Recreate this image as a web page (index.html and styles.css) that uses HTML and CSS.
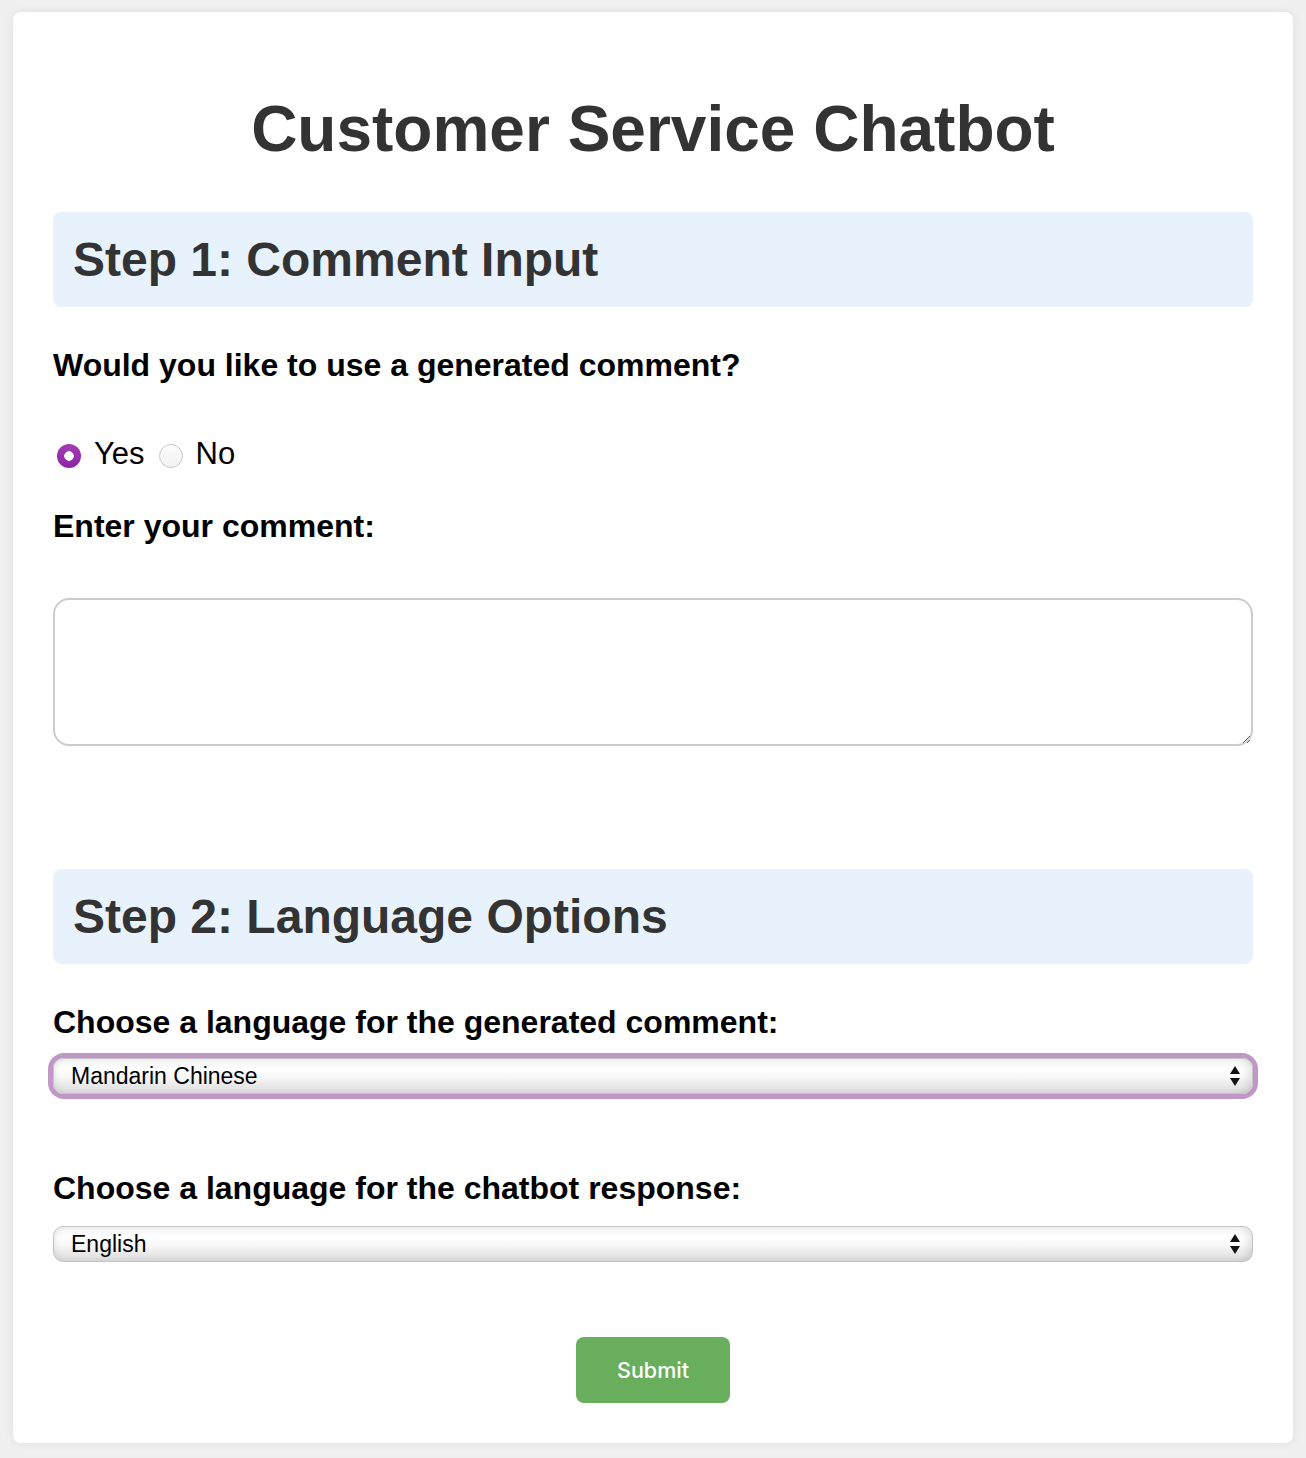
FILE: index.html
```html
<!DOCTYPE html>
<html lang="en">
<head>
<meta charset="utf-8">
<title>Customer Service Chatbot</title>
<link rel="stylesheet" href="styles.css">
</head>
<body>
<div class="container">
  <h1 class="title">Customer Service Chatbot</h1>

  <section class="step">
    <h2 class="step-title">Step 1: Comment Input</h2>
    <label class="q-label">Would you like to use a generated comment?</label>
    <div class="radio-row">
      <label class="radio"><input type="radio" name="gen" checked><span>Yes</span></label>
      <label class="radio"><input type="radio" name="gen"><span>No</span></label>
    </div>
    <label class="q-label comment-label" for="comment">Enter your comment:</label>
    <textarea id="comment" class="comment"></textarea>
  </section>

  <section class="step step-two">
    <h2 class="step-title">Step 2: Language Options</h2>
    <label class="q-label" for="lang1">Choose a language for the generated comment:</label>
    <div class="select-wrap focused">
      <select id="lang1" class="select">
        <option>Mandarin Chinese</option>
        <option>English</option>
      </select>
      <svg class="arrows" width="12" height="22" viewBox="0 0 12 22"><path d="M6 1 L11 9 H1 Z M6 21 L11 13 H1 Z" fill="#111"/></svg>
    </div>
    <label class="q-label second-lang" for="lang2">Choose a language for the chatbot response:</label>
    <div class="select-wrap">
      <select id="lang2" class="select">
        <option>English</option>
        <option>Mandarin Chinese</option>
      </select>
      <svg class="arrows" width="12" height="22" viewBox="0 0 12 22"><path d="M6 1 L11 9 H1 Z M6 21 L11 13 H1 Z" fill="#111"/></svg>
    </div>
  </section>

  <div class="actions">
    <button class="submit" type="button">Submit</button>
  </div>
</div>
</body>
</html>
```

FILE: styles.css
```css
html, body {
  margin: 0;
  padding: 0;
}
body {
  background: #f0f0f0;
  font-family: "Liberation Sans", Arial, Helvetica, sans-serif;
  padding: 12px 0 15px;
}
.container {
  width: 1280px;
  box-sizing: border-box;
  margin: 0 auto;
  background: #fff;
  border-radius: 8px;
  box-shadow: 0 0 12px rgba(0, 0, 0, 0.08);
  padding: 40px;
  display: flex;
  flex-direction: column;
}
.title {
  margin: 40px 0 46px;
  font-size: 64px;
  line-height: 74px;
  font-weight: bold;
  color: #333;
  text-align: center;
}
.step {
  display: flex;
  flex-direction: column;
}
.step-two {
  margin-top: 123px;
}
.step-title {
  margin: 0 0 40px;
  padding: 20px;
  background: #e8f2fd;
  border-radius: 8px;
  font-size: 48px;
  line-height: 55px;
  font-weight: bold;
  color: #333;
}
.q-label {
  display: block;
  font-size: 32px;
  line-height: 37px;
  font-weight: bold;
  color: #000;
}
.radio-row {
  display: flex;
  align-items: flex-start;
  margin-top: 52px;
  height: 40px;
  gap: 14px;
}
.radio {
  display: flex;
  align-items: flex-start;
  gap: 13px;
  font-size: 31px;
  line-height: 36px;
  color: #000;
}
.radio input {
  appearance: none;
  -webkit-appearance: none;
  margin: 8px 0 0;
  width: 24px;
  height: 24px;
  border-radius: 50%;
  border: 1px solid #c9c9c9;
  background: linear-gradient(#fdfdfd, #f1f1f1);
  box-sizing: border-box;
}
.radio:first-child input {
  margin-left: 4px;
}
.radio input:checked {
  border: none;
  background: radial-gradient(circle, #fff 0 4.5px, transparent 5px), linear-gradient(#a43cb6, #8e24a4);
}
.comment-label {
  margin-top: 32px;
}
.comment {
  margin-top: 53px;
  width: 100%;
  height: 148px;
  box-sizing: border-box;
  border: 2px solid #cccccc;
  border-radius: 16px;
  resize: vertical;
  font-family: inherit;
  font-size: 24px;
  padding: 10px;
  outline: none;
}
.select-wrap {
  position: relative;
  margin-top: 17px;
  height: 36px;
  border-radius: 11px;
}
.focused {
  box-shadow: 0 0 0 5px #c197c8;
}
.second-lang {
  margin-top: 76px;
}
.second-lang + .select-wrap {
  margin-top: 19px;
}
.select {
  appearance: none;
  -webkit-appearance: none;
  width: 100%;
  height: 36px;
  box-sizing: border-box;
  border: 1px solid #c4c4c4;
  border-radius: 10px;
  background: linear-gradient(to bottom, #f2f2f2 0%, #ffffff 30%, #f7f7f7 55%, #e4e4e4 85%, #d6d6d6 100%);
  box-shadow: inset 6px 0 6px -4px rgba(0,0,0,0.08), inset -10px 0 8px -6px rgba(0,0,0,0.1);
  font-family: "Liberation Sans", Arial, Helvetica, sans-serif;
  font-size: 23px;
  color: #000;
  padding: 0 40px 0 17px;
  outline: none;
}
.arrows {
  position: absolute;
  right: 12px;
  top: 7px;
  pointer-events: none;
}
.actions {
  display: flex;
  justify-content: center;
  margin-top: 75px;
}
.submit {
  width: 154px;
  height: 66px;
  border: none;
  border-radius: 8px;
  background: #68ae5d;
  color: #fff;
  font-family: Inter, "Liberation Sans", Arial, sans-serif;
  font-weight: 500;
  font-size: 21.5px;
}
```
